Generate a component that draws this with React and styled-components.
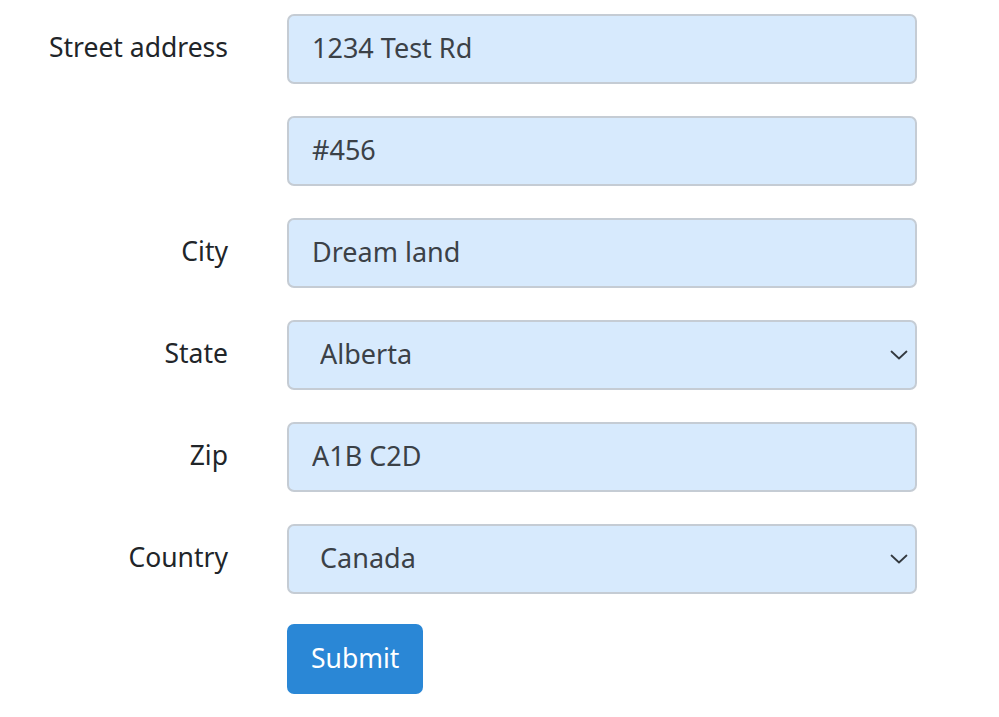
import React from 'react';
import styled, { createGlobalStyle } from 'styled-components';

const Global = createGlobalStyle`
  body {
    margin: 0;
    background: #ffffff;
    font-family: "Noto Sans", "Open Sans", sans-serif;
  }
`;

const Form = styled.form`
  padding-top: 14px;
  display: flex;
  flex-direction: column;
  gap: 32px;
`;

const Row = styled.div`
  display: grid;
  grid-template-columns: 228px 630px;
  column-gap: 59px;
  align-items: center;
  height: 70px;
  margin-top: ${(p) => (p.$tight ? '-2px' : '0')};
`;

const Label = styled.label`
  text-align: right;
  font-size: 26.5px;
  line-height: 1.2;
  padding-bottom: 3px;
  color: #212529;
`;

const fieldBase = `
  box-sizing: border-box;
  width: 100%;
  height: 70px;
  margin: 0;
  background-color: #d7eafd;
  border: 2px solid #c5ccd4;
  border-radius: 7px;
  font-family: "Noto Sans", "Open Sans", sans-serif;
  font-size: 27px;
  color: #3b4147;
  outline: none;
`;

const Input = styled.input`
  ${fieldBase}
  padding: 0 23px 3px;
`;

const Select = styled.select`
  ${fieldBase}
  padding: 0 50px 3px 31px;
  appearance: none;
  -webkit-appearance: none;
  background-image: url("data:image/svg+xml;utf8,<svg xmlns='http://www.w3.org/2000/svg' width='18' height='12' viewBox='0 0 18 12'><polyline points='1.5,2.5 9,9.5 16.5,2.5' fill='none' stroke='%23343a40' stroke-width='1.8' stroke-linecap='round' stroke-linejoin='round'/></svg>");
  background-repeat: no-repeat;
  background-position: right 7px center;
  background-size: 18px 12px;
`;

const Button = styled.button`
  box-sizing: border-box;
  grid-column: 2;
  justify-self: start;
  height: 70px;
  padding: 0 24px 3px;
  background: #2a87d6;
  color: #ffffff;
  border: none;
  border-radius: 7px;
  font-family: "Noto Sans", "Open Sans", sans-serif;
  font-size: 26.5px;
`;

const Field = ({ label, children }) => (
  <Row>
    <Label>{label}</Label>
    {children}
  </Row>
);

export default function App() {
  return (
    <>
      <Global />
      <Form onSubmit={(e) => e.preventDefault()}>
        <Field label="Street address">
          <Input defaultValue="1234 Test Rd" />
        </Field>
        <Field label="">
          <Input defaultValue="#456" />
        </Field>
        <Field label="City">
          <Input defaultValue="Dream land" />
        </Field>
        <Field label="State">
          <Select defaultValue="Alberta">
            <option>Alberta</option>
            <option>British Columbia</option>
            <option>Ontario</option>
          </Select>
        </Field>
        <Field label="Zip">
          <Input defaultValue="A1B C2D" />
        </Field>
        <Field label="Country">
          <Select defaultValue="Canada">
            <option>Canada</option>
            <option>United States</option>
          </Select>
        </Field>
        <Row $tight>
          <Button type="submit">Submit</Button>
        </Row>
      </Form>
    </>
  );
}
